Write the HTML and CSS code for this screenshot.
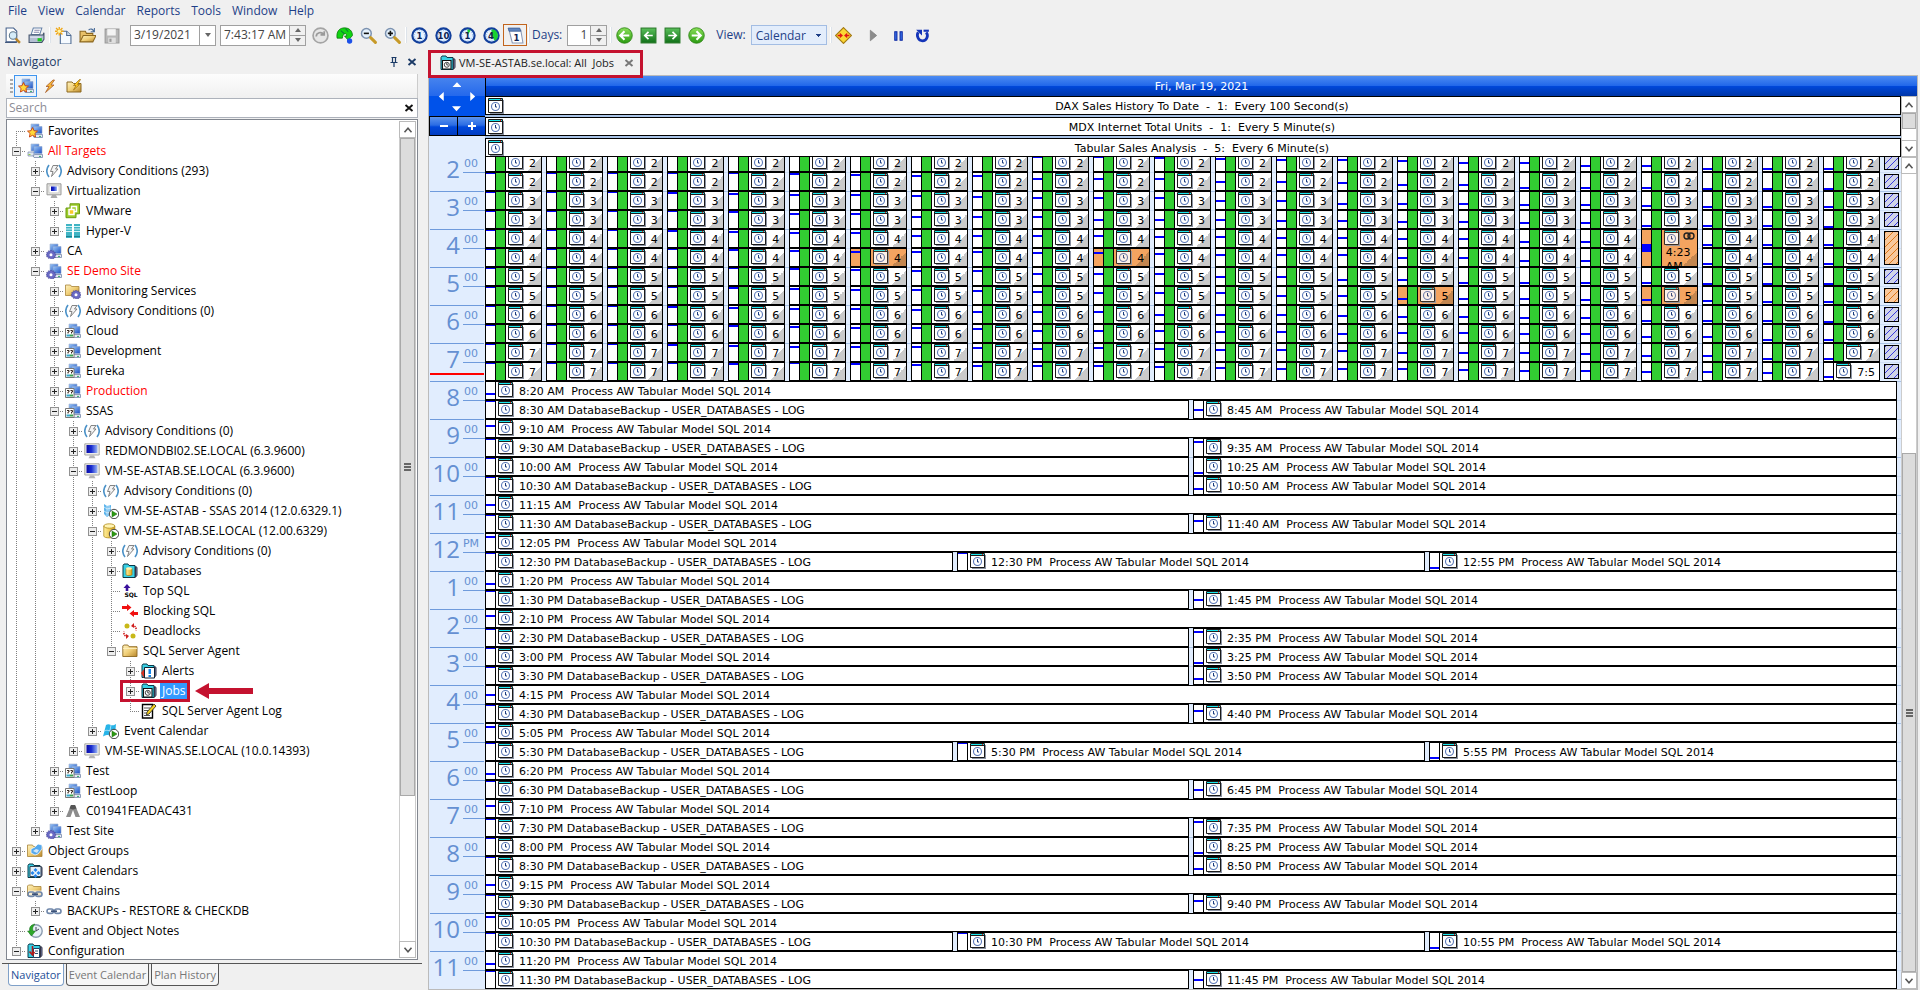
FILE: index.html
```html
<!DOCTYPE html>
<html lang="en">
<head>
<meta charset="utf-8">
<title>VM-SE-ASTAB.se.local: All Jobs</title>
<link rel="stylesheet" href="styles.css">
</head>
<body>
<svg class="sprite" aria-hidden="true">
  <defs>
    <linearGradient id="gBlue" x1="0" y1="0" x2="1" y2="1"><stop offset="0" stop-color="#9cc8f8"/><stop offset="1" stop-color="#1c4fc0"/></linearGradient>
    <linearGradient id="gScreen" x1="0" y1="0" x2="1" y2="0"><stop offset="0" stop-color="#0a0aa8"/><stop offset=".45" stop-color="#1a2ed0"/><stop offset="1" stop-color="#9db8f4"/></linearGradient>
    <linearGradient id="gGold" x1="0" y1="0" x2="1" y2="1"><stop offset="0" stop-color="#fff3c0"/><stop offset=".5" stop-color="#f0cf78"/><stop offset="1" stop-color="#b8862a"/></linearGradient>
    <linearGradient id="gGreen" x1="0" y1="0" x2="0" y2="1"><stop offset="0" stop-color="#8be05a"/><stop offset="1" stop-color="#2a9a10"/></linearGradient>
    <linearGradient id="gGreenSq" x1="0" y1="0" x2="0" y2="1"><stop offset="0" stop-color="#5ac05a"/><stop offset="1" stop-color="#107018"/></linearGradient>
    <linearGradient id="gDb" x1="0" y1="0" x2="1" y2="0"><stop offset="0" stop-color="#fff0a0"/><stop offset="1" stop-color="#e0a818"/></linearGradient>
    <g id="pPcs"><path d="M4 1h8v7H4z" fill="url(#gBlue)" stroke="#9db0cc" stroke-width=".6"/><path d="M7 3.500h8v7H7z" fill="url(#gBlue)" stroke="#8da4cc" stroke-width=".6"/><path d="M6 12.500l2-1h7.500v3H7z" fill="#e6eaf4" stroke="#7587a8" stroke-width=".8"/><path d="M12 13.400h2" stroke="#3a6" /></g>
    <g id="pGear"><g fill="#6a6ac4" stroke="#3c3c94" stroke-width=".5"><path d="M5 7l1 1.300 1.500-.6.300 1.600 1.600.2-.5 1.500 1.300 1-1.300 1 .5 1.500-1.600.2-.3 1.500-1.500-.6L5 16l-1-1.100-1.500.6-.3-1.500-1.600-.2.500-1.500L-.1 12l1.200-1-.5-1.500 1.600-.2.300-1.600L4 8.300z"/></g><circle cx="5" cy="11.800" r="1.500" fill="#fff"/></g>
    <g id="pPlay"><circle cx="11" cy="11" r="4.700" fill="#fff" stroke="#333" stroke-width=".9"/><path d="M9 7.900v6.200l5-3.100z" fill="#2c9a10" stroke="#156a04" stroke-width=".5"/></g>
    <g id="pTeal"><path d="M1 2.500l1-1.500h4l1 1.500h6v12H1z" fill="#38d0e4" stroke="#0b3a4a"/><path d="M13.500 3.500l1.500.8v8l-1.500 2z" fill="#7b88b8" stroke="#334"/></g>
    <g id="pClock"><circle cx="8" cy="8" r="6.700" fill="#e8f3ff" stroke="#123f9c" stroke-width="2"/><circle cx="8" cy="8" r="4.900" fill="none" stroke="#9cc4f0" stroke-width="1" stroke-dasharray="1 1.200"/></g>
    <g id="pLens"><circle cx="6" cy="6" r="4.600" fill="#e4f1fc" stroke="#7c92b0" stroke-width="1.400"/><path d="M10 10l4.500 4.500" stroke="#c79a28" stroke-width="2.800" stroke-linecap="round"/></g>
    <g id="pChain" fill="none" stroke="#6f87aa" stroke-width="1.600"><rect x="1" y="6" width="6.500" height="4.400" rx="2.200"/><rect x="8.500" y="6" width="6.500" height="4.400" rx="2.200"/><path d="M5 8.200h6" stroke="#3c5278"/></g>
  </defs>
  <symbol id="i-preview" viewBox="0 0 16 16"><path d="M2 1h7l3 3v10H2z" fill="#fff" stroke="#47628c"/><path d="M1 14.500h11" stroke="#3a5078"/><circle cx="8.500" cy="8" r="3.500" fill="#d5ecf8" stroke="#60788c"/><path d="M11 11l4 4" stroke="#b98428" stroke-width="2.400"/></symbol>
  <symbol id="i-print" viewBox="0 0 16 16"><path d="M5 1h8l-2 6H3z" fill="#fff" stroke="#6682a8"/><path d="M6 3h5M5.400 5h5" stroke="#88a"/><path d="M1 7.500h13l1-2v6l-2 3H1z" fill="#b4bfd2" stroke="#44546c"/><path d="M2 9.500h10" stroke="#eef"/><path d="M9 10.500h4v3H9z" fill="#1fc81f"/></symbol>
  <symbol id="i-new" viewBox="0 0 16 16"><path d="M5 4h6l4 4v8H5z" fill="#f5faff" stroke="#4c6890"/><path d="M11 4v4h4" fill="#cde" stroke="#4c6890"/><path d="M4 0v8M0 4h8M1 1l6 6M7 1L1 7" stroke="#f0a818" stroke-width="1.300"/><circle cx="4" cy="4" r="1.600" fill="#fff7a8"/></symbol>
  <symbol id="i-open" viewBox="0 0 16 16"><path d="M1 14V4h5l1 2h6v2" fill="#e8c068" stroke="#8c6820"/><path d="M1 14L4 8h12l-3 6z" fill="url(#gGold)" stroke="#8c6820"/><path d="M9 3c2-2 4-1 5 1M14.500 1v3.500H11" fill="none" stroke="#4a6c98"/></symbol>
  <symbol id="i-save" viewBox="0 0 16 16"><path d="M2 2h13v13H2z" fill="#b8b8b8" stroke="#999"/><path d="M4 2h8v6H4z" fill="#f4f4f4"/><path d="M5 10h7v5H5z" fill="#e0e0e0"/><path d="M6 11h2v3H6z" fill="#999"/></symbol>
  <symbol id="i-undo" viewBox="0 0 16 16"><circle cx="8" cy="8" r="7" fill="#e6e6e6" stroke="#a4a4a4" stroke-width="1.600"/><path d="M4 9c0-4 5-5 7-2M11.500 4v3.500H8" fill="none" stroke="#999" stroke-width="1.600"/></symbol>
  <symbol id="i-sync" viewBox="0 0 16 16"><path d="M1 10.500C0 4 3.500 .8 8 .8s7.500 3 7.500 7.200l-4 4.500L8 8.500h2C10.500 5.500 6.500 5 6 10.500z" fill="#12d412" stroke="#087008" stroke-width=".7"/><path d="M4.500 3.500l3.500 3M9 1.500l2.500 3" stroke="#0a7a3a"/><circle cx="12.800" cy="13.200" r="2.500" fill="#1c50e8"/></symbol>
  <symbol id="i-zout" viewBox="0 0 16 16"><use href="#pLens"/><path d="M3.600 6h4.800" stroke="#111" stroke-width="1.500"/></symbol>
  <symbol id="i-zin" viewBox="0 0 16 16"><use href="#pLens"/><path d="M3.600 6h4.800M6 3.600v4.800" stroke="#111" stroke-width="1.500"/></symbol>
  <symbol id="i-c1" viewBox="0 0 16 16"><use href="#pClock"/><text x="8" y="11" class="ic-num">1</text></symbol>
  <symbol id="i-c10" viewBox="0 0 16 16"><use href="#pClock"/><text x="8" y="11" class="ic-num">10</text></symbol>
  <symbol id="i-c1g" viewBox="0 0 16 16"><use href="#pClock"/><path d="M8 8V2l3 1z" fill="#18d030"/><text x="8" y="11" class="ic-num">1</text></symbol>
  <symbol id="i-c4g" viewBox="0 0 16 16"><use href="#pClock"/><path d="M8 8V2.300A5.700 5.700 0 0 1 11 13z" fill="#18d030"/><text x="7.500" y="11" class="ic-num">4</text></symbol>
  <symbol id="i-day" viewBox="0 0 16 16"><path d="M2 3h11l2 12H5z" fill="#fff" stroke="#8a9ab8"/><path d="M1 1h11l1 3H2z" fill="#5f86c0" stroke="#3b5a90" stroke-width=".7"/><text x="9" y="13" class="ic-num">1</text></symbol>
  <symbol id="i-left" viewBox="0 0 16 16"><circle cx="8" cy="8" r="7.300" fill="url(#gGreen)" stroke="#2c8414" stroke-width=".8"/><path d="M12.500 8H4.500M8 4L4 8l4 4" fill="none" stroke="#fff" stroke-width="2"/></symbol>
  <symbol id="i-right" viewBox="0 0 16 16"><circle cx="8" cy="8" r="7.300" fill="url(#gGreen)" stroke="#2c8414" stroke-width=".8"/><path d="M3.500 8h8M8 4l4 4-4 4" fill="none" stroke="#fff" stroke-width="2"/></symbol>
  <symbol id="i-sqleft" viewBox="0 0 16 16"><rect x="1" y="1" width="14" height="14" fill="url(#gGreenSq)" stroke="#2a7a2a"/><path d="M12 8H5M8 4.500L4.500 8 8 11.500" fill="none" stroke="#fff" stroke-width="1.600"/></symbol>
  <symbol id="i-sqright" viewBox="0 0 16 16"><rect x="1" y="1" width="14" height="14" fill="url(#gGreenSq)" stroke="#2a7a2a"/><path d="M4 8h7M8 4.500L11.500 8 8 11.500" fill="none" stroke="#fff" stroke-width="1.600"/></symbol>
  <symbol id="i-diamond" viewBox="0 0 16 16"><path d="M8 .5L15.500 8 8 15.500.500 8z" fill="#fbd634" stroke="#a47a14"/><path d="M2.500 7.300h2V5.500l3 2.500-3 2.500V8.700h-2zM13.500 7.300h-2V5.500l-3 2.500 3 2.500V8.700h2z" fill="#e01414"/></symbol>
  <symbol id="i-play" viewBox="0 0 16 16"><path d="M5 3l6 5-6 5z" fill="#8c8c8c" stroke="#777" stroke-width=".6"/></symbol>
  <symbol id="i-pause" viewBox="0 0 16 16"><path d="M4.500 4.500h2v8h-2zM9.500 4.500h2v8h-2z" fill="#3c7cf4" stroke="#0a24a0"/></symbol>
  <symbol id="i-refresh" viewBox="0 0 16 16"><path d="M4 5c-2 3 0 8 4 8s6-5 3.500-8" fill="none" stroke="#1434b8" stroke-width="2.600"/><path d="M2 2.500h5.500V8z" fill="#1434b8"/><path d="M9 3.500h5" stroke="#1434b8" stroke-width="2"/></symbol>
  <symbol id="i-pin" viewBox="0 0 16 16"><path d="M5.500 3.500h5M6.500 3.500v5M9.500 3v5.500M4.500 8.500h7M8 9v4" fill="none" stroke="#1b3a66" stroke-width="1.200"/></symbol>
  <symbol id="i-x" viewBox="0 0 16 16"><path d="M4.500 5l7 6M11.500 5l-7 6" stroke="currentColor" stroke-width="1.900"/></symbol>
  <symbol id="i-bolt" viewBox="0 0 16 16"><path d="M11 2L4 8.500h3L3.500 14.500l8.500-7.500H9l3.500-5z" fill="#f8b838" stroke="#a85c28" stroke-width=".8"/></symbol>
  <symbol id="i-fbolt" viewBox="0 0 16 16"><path d="M1 4h5l1.500 1.500H15v8.500H1z" fill="url(#gGold)" stroke="#8c6820"/><path d="M13.500 1.500L7.500 7.500h2.500L7.500 12l6-5.500h-2l3-5z" fill="#ffc820" stroke="#9a6a10" stroke-width=".7"/></symbol>

  <symbol id="i-fav" viewBox="0 0 16 16"><use href="#pPcs"/><path d="M5.500 4.500l1.500 3.200 3.500.4-2.600 2.400.7 3.500-3.100-1.700L2.400 14l.7-3.500L.5 8.100 4 7.700z" fill="#ffd83a" stroke="#c83c10" stroke-width=".9"/></symbol>
  <symbol id="i-targets" viewBox="0 0 16 16"><path d="M1 9h6v4H1z" fill="#dfe5f0" stroke="#7587a8" stroke-width=".7"/><path d="M1.500 11.600h2" stroke="#8c3"/><use href="#pPcs"/></symbol>
  <symbol id="i-adv" viewBox="0 0 16 16"><path d="M3 2C0 6 0 10 3 14M13 2c3 4 3 8 0 12" fill="none" stroke="#4c92c8" stroke-width="1.600"/><path d="M7 2.500h5L9.500 6H12l-6.500 7.500L7 8.500H4.500z" fill="#f4f4f4" stroke="#777" stroke-width=".9"/></symbol>
  <symbol id="i-virt" viewBox="0 0 16 16"><path d="M1 .8h14v11H1z" fill="#e4e4e0" stroke="#999"/><path d="M3 2.800h10v7H3z" fill="#fff" stroke="#bbb" stroke-width=".6"/><path d="M5 3.500h6v4.500H5z" fill="url(#gScreen)"/><path d="M6 12h4l1.500 3h-7z" fill="#aaa"/></symbol>
  <symbol id="i-vm" viewBox="0 0 16 16"><path d="M5 .8h9.500v10H11V14.700H1V5h4z" fill="#9ccc2a" stroke="#6c9c10"/><rect x="6.500" y="3.500" width="5" height="5" fill="none" stroke="#fff" stroke-width="1.500"/><rect x="4" y="6.500" width="5" height="5" fill="#f8c828" stroke="#fff" stroke-width="1.500"/></symbol>
  <symbol id="i-hv" viewBox="0 0 16 16"><path d="M1 1h6v14H1zM9 1h6v14H9z" fill="#3fb4c4"/><path d="M1 3.500h6M1 6h6M1 8.500h6M9 3.500h6M9 6h6M9 8.500h6" stroke="#d4f4f8"/><path d="M1 13.500h6M9 13.500h6" stroke="#1c8090"/></symbol>
  <symbol id="i-site" viewBox="0 0 16 16"><use href="#pPcs"/><use href="#pGear"/></symbol>
  <symbol id="i-fgear" viewBox="0 0 16 16"><path d="M0.500 3V2h5l1 1.500H14v9H.5z" fill="url(#gGold)" stroke="#a88438" stroke-width=".8"/><use href="#pGear" x="6"/></symbol>
  <symbol id="i-group" viewBox="0 0 16 16"><use href="#pPcs"/><path d="M.5 5.500h8.500v9H.5z" fill="#fff" stroke="#777"/><path d="M2 7.500h2v1.500H3v1.500M5.500 7.500h2v1.500h-1v1.500" fill="none" stroke="#3a2a20"/><path d="M1.500 12.500h3.500" stroke="#38a8c8" stroke-width="2"/><path d="M5 12.500h3" stroke="#3aa050" stroke-width="2"/></symbol>
  <symbol id="i-pc" viewBox="0 0 16 16"><path d="M.8.800h14.400v11.200H.8z" fill="#ecece8" stroke="#a8a8a4"/><path d="M2.500 2h11v8h-11z" fill="url(#gScreen)"/><path d="M6 12.500h4l1.500 2.700h-7z" fill="#b4b4b4"/></symbol>
  <symbol id="i-ssas" viewBox="0 0 16 16"><path d="M1 1l3 2 4-1v9l-4 3-3-3z" fill="#5cb4ec"/><path d="M1 4l3 2 4-1M1 8l3 2 4-1M4 3v10M6 2.500V12" stroke="#fff" fill="none" stroke-width=".6"/><use href="#pPlay"/></symbol>
  <symbol id="i-db" viewBox="0 0 16 16"><path d="M.8 3v10c0 2.500 11 2.500 11 0V3z" fill="url(#gDb)" stroke="#b08a18" stroke-width=".8"/><ellipse cx="6.300" cy="3" rx="5.500" ry="2.200" fill="#fff4b4" stroke="#b08a18" stroke-width=".8"/><use href="#pPlay"/></symbol>
  <symbol id="i-dbs" viewBox="0 0 16 16"><use href="#pTeal"/><path d="M4 5.500v6c0 1.400 6 1.400 6 0v-6z" fill="url(#gDb)" stroke="#a07410" stroke-width=".7"/><ellipse cx="7" cy="5.500" rx="3" ry="1.200" fill="#fff4b4"/></symbol>
  <symbol id="i-topsql" viewBox="0 0 16 16"><path d="M5 1L1.500 5h2.200v3h2.600V5h2.200z" fill="#3a109c"/><text x="9" y="14" class="ic-sql">SQL</text></symbol>
  <symbol id="i-block" viewBox="0 0 16 16"><path d="M0 3h5V1l4.500 3.500L5 8V6H0z" fill="#f01010"/><path d="M16 9h-4V7L7.500 10.500 12 14v-2h4z" fill="#f01010"/></symbol>
  <symbol id="i-dead" viewBox="0 0 16 16"><circle cx="5" cy="3" r="2.500" fill="#c8b818"/><circle cx="11" cy="13" r="2.500" fill="#c8b818"/><path d="M10 2.500c3 0 4.500 2 4 5M6 13.500c-3 0-4.500-2-4-5" fill="none" stroke="#d02020" stroke-width="1.600" stroke-dasharray="1.500 .8"/><path d="M9 3l3-3v5zM7 13l-3 3v-5z" fill="#d02020"/></symbol>
  <symbol id="i-folder" viewBox="0 0 16 16"><path d="M.8 13.500V3l1-1h4l1.200 1.700H15v9.800z" fill="url(#gGold)" stroke="#8c6820" stroke-width=".9"/><path d="M1 5.500h14" stroke="#fff3c4" stroke-width=".8"/></symbol>
  <symbol id="i-alerts" viewBox="0 0 16 16"><use href="#pTeal"/><path d="M0 10l3-4v9z" fill="#d83020"/><path d="M3.500 4.500h10v10.500h-10z" fill="#fff" stroke="#123"/><path d="M7.500 6h2.500v5H7.500zM7.500 12h2.500v2H7.500z" fill="#1484e8"/></symbol>
  <symbol id="i-jobs" viewBox="0 0 16 16"><use href="#pTeal"/><path d="M2.500 5.500h8.500v8.500H2.500z" fill="#fff" stroke="#111" stroke-width="1.100"/><circle cx="6.800" cy="9.800" r="2.500" fill="#fff" stroke="#333" stroke-width=".9"/><path d="M6.800 8v2h1.500" fill="none" stroke="#111" stroke-width=".8"/></symbol>
  <symbol id="i-log" viewBox="0 0 16 16"><path d="M1.500 1.500h10v13.500h-10z" fill="#fff" stroke="#000" stroke-width="1.400"/><path d="M3 5h6M3 7.500h6M3 10h6M3 12.500h6" stroke="#555"/><path d="M13 1l2 2-7 8-2.500 1L6 9z" fill="#f4d020" stroke="#222" stroke-width=".8"/></symbol>
  <symbol id="i-evcal" viewBox="0 0 16 16"><path d="M3 2c2-1.500 3.500-.5 5 0s3 .5 5-1l-1 11c-3 2-5 0-7 0-1.500 0-3 0-5 1.500z" fill="#28b4e8"/><path d="M8 2l-2 11M1.500 8c3-2 5 1 11 0" stroke="#d8f4ff" fill="none" stroke-width=".7"/><use href="#pPlay"/></symbol>
  <symbol id="i-tent" viewBox="0 0 16 16"><path d="M6 2h4l5 12h-4.500L8 7l-2.500 7H1z" fill="#8c8c8c"/><path d="M6 2h4l1.500 3.500-3.500 1-3.500-1z" fill="#555"/></symbol>
  <symbol id="i-objg" viewBox="0 0 16 16"><path d="M.5 13.500V2h5l1 1.500H15v10z" fill="url(#gGold)" stroke="#a88438" stroke-width=".8"/><path d="M4 6l4-2 3-3 4 1v4l-4 5-3 1-4-2z" fill="#55a8ec" stroke="#fff" stroke-width=".7"/><path d="M6 8l3-2 3 1-2 3z" fill="#cfe8fc"/></symbol>
  <symbol id="i-evcals" viewBox="0 0 16 16"><use href="#pTeal"/><path d="M3 3.500h11v10H3z" fill="#e8f0f8" stroke="#345"/><path d="M8.500 5l2 2-2 2-2-2zM5.500 8l2 2-2 2-2-2zM11.500 8l2 2-2 2-2-2zM8.500 11l2 2-2 2-2-2z" fill="#2484ec"/></symbol>
  <symbol id="i-chains" viewBox="0 0 16 16"><path d="M.5 12.500V3l1-1h4l1 1.500H14v9z" fill="url(#gGold)" stroke="#a88438" stroke-width=".8"/><path d="M1 7.500h14v7H1z" fill="#fff" fill-opacity=".7"/><use href="#pChain" y="3"/></symbol>
  <symbol id="i-chain" viewBox="0 0 16 16"><use href="#pChain"/></symbol>
  <symbol id="i-notes" viewBox="0 0 16 16"><circle cx="9" cy="8" r="6.200" fill="#e8f0f8" stroke="#8c9cb0" stroke-width="1.400"/><path d="M9 4v4l3-2" stroke="#445" fill="none"/><path d="M8 1C3 2 2 5 3 8H.5l4 5 4-5H6c-1-3 0-5 2-7z" fill="#2fa82a" stroke="#14701a" stroke-width=".5"/></symbol>
  <symbol id="i-config" viewBox="0 0 16 16"><use href="#pTeal"/><path d="M6.500 5.500h6v9h-6z" fill="#fff" stroke="#246"/><path d="M8 8h3M8 10.500h3" stroke="#357"/><path d="M5.500 3v8M2.500 8.500l3 3.500 2-3" stroke="#b01818" stroke-width="1.600" fill="none"/></symbol>
  <symbol id="i-job" viewBox="0 0 16 16"><path d="M2 2h14v14H2z" fill="#8c94a4"/><path d="M.5.500h14v14H.5z" fill="#fff" stroke="#1a1a1a"/><path d="M1 1h13v1H1z" fill="#18e8f0"/><path d="M12 1h1v1h-1z" fill="#f02020"/><path d="M1 2.500h13" stroke="#1a1a1a"/><circle cx="7.500" cy="8.500" r="4" fill="#fff" stroke="#5a78b8" stroke-width="1.100"/><path d="M7.500 6v3h1.500" fill="none" stroke="#1c3c80"/></symbol>
  <symbol id="i-link" viewBox="0 0 12 10"><circle cx="4" cy="5" r="3" fill="none" stroke="#222" stroke-width="1.400"/><circle cx="8" cy="5" r="3" fill="none" stroke="#222" stroke-width="1.400"/></symbol>
  <symbol id="i-up" viewBox="0 0 16 16"><path d="M4 10.500L8 6l4 4.500" fill="none" stroke="#555" stroke-width="1.800"/></symbol>
  <symbol id="i-down" viewBox="0 0 16 16"><path d="M4 5.500L8 10l4-4.500" fill="none" stroke="#555" stroke-width="1.800"/></symbol>
</svg>

<div class="app">
  <nav class="menu" aria-label="Main menu">
    <button>File</button><button>View</button><button>Calendar</button><button>Reports</button><button>Tools</button><button>Window</button><button>Help</button>
  </nav>

  <div class="toolbar" role="toolbar" aria-label="Standard">
    <button class="tb" aria-label="Print preview"><svg><use href="#i-preview"/></svg></button>
    <button class="tb" aria-label="Print"><svg><use href="#i-print"/></svg></button>
    <i class="sep"></i>
    <button class="tb" aria-label="New"><svg><use href="#i-new"/></svg></button>
    <button class="tb" aria-label="Open"><svg><use href="#i-open"/></svg></button>
    <button class="tb" aria-label="Save"><svg><use href="#i-save"/></svg></button>
    <div class="field date"><input type="text" value="3/19/2021" aria-label="Date"><button class="drop" aria-label="Open date picker"></button></div>
    <div class="field time"><input type="text" value="7:43:17 AM" aria-label="Time"><span class="spin"><button aria-label="Later"></button><button aria-label="Earlier"></button></span></div>
    <button class="tb" aria-label="Now"><svg><use href="#i-undo"/></svg></button>
    <button class="tb" aria-label="Synchronize"><svg><use href="#i-sync"/></svg></button>
    <button class="tb" aria-label="Zoom out"><svg><use href="#i-zout"/></svg></button>
    <button class="tb" aria-label="Zoom in"><svg><use href="#i-zin"/></svg></button>
    <i class="sep"></i>
    <button class="tb" aria-label="1 minute"><svg><use href="#i-c1"/></svg></button>
    <button class="tb" aria-label="10 minutes"><svg><use href="#i-c10"/></svg></button>
    <button class="tb" aria-label="1 hour"><svg><use href="#i-c1g"/></svg></button>
    <button class="tb" aria-label="4 hours"><svg><use href="#i-c4g"/></svg></button>
    <button class="tb on" aria-label="1 day"><svg><use href="#i-day"/></svg></button>
    <i class="sep"></i>
    <label for="days" class="lbl">Days:</label>
    <div class="field days"><input type="text" id="days" value="1"><span class="spin"><button aria-label="More days"></button><button aria-label="Fewer days"></button></span></div>
    <i class="sep"></i>
    <button class="tb" aria-label="Back"><svg><use href="#i-left"/></svg></button>
    <button class="tb" aria-label="Previous"><svg><use href="#i-sqleft"/></svg></button>
    <button class="tb" aria-label="Next"><svg><use href="#i-sqright"/></svg></button>
    <button class="tb" aria-label="Forward"><svg><use href="#i-right"/></svg></button>
    <label for="view" class="lbl view">View:</label>
    <select id="view"><option>Calendar</option></select>
    <i class="sep"></i>
    <button class="tb" aria-label="Conflicts"><svg><use href="#i-diamond"/></svg></button>
    <button class="tb wide" aria-label="Run"><svg><use href="#i-play"/></svg></button>
    <button class="tb" aria-label="Pause"><svg><use href="#i-pause"/></svg></button>
    <button class="tb" aria-label="Refresh"><svg><use href="#i-refresh"/></svg></button>
  </div>

  <div class="work">
    <aside class="navigator">
      <header class="nav-title"><h2>Navigator</h2><button aria-label="Pin"><svg><use href="#i-pin"/></svg></button><button aria-label="Close navigator"><svg><use href="#i-x"/></svg></button></header>
      <div class="nav-tools">
        <i class="grip"></i>
        <button class="on" aria-label="Targets"><svg><use href="#i-fav"/></svg></button>
        <button aria-label="Conditions"><svg><use href="#i-bolt"/></svg></button>
        <button aria-label="Condition groups"><svg><use href="#i-fbolt"/></svg></button>
      </div>
      <div class="search"><input type="text" placeholder="Search" aria-label="Search"><button aria-label="Clear search"><svg><use href="#i-x"/></svg></button></div>
      <div class="tree-box">
        <div class="tree" id="tree" role="tree"></div>
        <div class="scroll nav-scroll">
          <button aria-label="Scroll tree up"><svg><use href="#i-up"/></svg></button>
          <div class="track"><div class="thumb"><i class="bars"></i></div></div>
          <button aria-label="Scroll tree down"><svg><use href="#i-down"/></svg></button>
        </div>
      </div>
      <div class="nav-tabs" role="tablist"><button role="tab" class="on">Navigator</button><button role="tab">Event Calendar</button><button role="tab">Plan History</button></div>
    </aside>

    <main class="main">
      <div class="doc-tabs">
        <div class="doc-tab"><svg><use href="#i-jobs"/></svg><span>VM-SE-ASTAB.se.local: All&nbsp; Jobs</span><button aria-label="Close tab"><svg><use href="#i-x"/></svg></button></div>
      </div>
      <section class="cal">
        <div class="gutter">
          <div class="pad"><button class="up" aria-label="Up"></button><button class="lf" aria-label="Left"></button><button class="rt" aria-label="Right"></button><button class="dn" aria-label="Down"></button></div>
          <div class="zoom"><button class="minus" aria-label="Collapse"></button><button class="plus" aria-label="Expand"></button></div>
          <div class="hours" id="hours"></div>
        </div>
        <div class="days-view">
          <h1 class="day-head">Fri, Mar 19, 2021</h1>
          <div class="strip">
            <div class="allday" id="allday"></div>
            <div class="scroll top-scroll">
              <button aria-label="Scroll all-day up"><svg><use href="#i-up"/></svg></button>
              <div class="track"><div class="thumb"></div></div>
              <button aria-label="Scroll all-day down"><svg><use href="#i-down"/></svg></button>
            </div>
          </div>
          <div class="strip fill">
            <div class="slots">
              <div class="dense" id="dense"></div>
              <div class="rows" id="rows"></div>
            </div>
            <div class="scroll day-scroll">
              <button aria-label="Scroll day up"><svg><use href="#i-up"/></svg></button>
              <div class="track"><div class="thumb"><i class="bars"></i></div></div>
              <button aria-label="Scroll day down"><svg><use href="#i-down"/></svg></button>
            </div>
          </div>
        </div>
      </section>
    </main>
  </div>
</div>
<script src="app.js"></script>
</body>
</html>
```

FILE: styles.css
```css
* { box-sizing: border-box; }
body {
  margin: 0;
  background: #f0f0f0;
  color: #000;
  font: 12px/20px "Open Sans", "Noto Sans", sans-serif;
}
button, input, select { font: inherit; color: inherit; margin: 0; padding: 0; border: 0; background: none; border-radius: 0; }
button { cursor: default; }
h1, h2 { margin: 0; font-weight: normal; }
svg { display: block; width: 16px; height: 16px; flex: none; }
.sprite { position: absolute; width: 0; height: 0; }
.ic-num { font: bold 8px "DejaVu Sans", sans-serif; text-anchor: middle; fill: #0c1c50; }
.ic-sql { font: bold 6px "DejaVu Sans", sans-serif; text-anchor: middle; fill: #000; }

.app { display: flex; flex-direction: column; height: 100vh; overflow: hidden; }

/* menu and toolbar */
.menu { display: flex; gap: 11px; height: 22px; padding-left: 8px; color: #1e3f87; }
.toolbar { display: flex; align-items: center; gap: 4px; height: 26px; padding-left: 2px; color: #1e3f87; }
.tb { display: grid; place-items: center; width: 20px; height: 20px; }
.tb svg { width: 17px; height: 17px; }
.tb.on { width: 24px; height: 22px; border: 1px solid #c2641c; margin: 0 -2px; }
.tb.wide { margin: 0 1px 0 6px; }
.sep { width: 1px; height: 16px; background: #fff; margin: 0 -1px; box-shadow: 1px 0 #dde3ea; }
.field { display: flex; height: 21px; background: #fff; border: 1px solid #a0a0a0; color: #444; }
.field input { flex: 1; min-width: 0; padding-left: 3px; outline: 0; }
.date { width: 86px; margin: 0 0 0 5px; }
.time { width: 86px; }
.days { width: 40px; }
.days input { text-align: right; padding-right: 3px; }
.drop { width: 16px; border-left: 1px solid #a0a0a0; display: grid; place-items: center; }
.drop::after, .spin button::after { content: ""; border: 3px solid transparent; border-top: 4px solid #666; border-bottom: 0; }
.spin { display: flex; flex-direction: column; width: 16px; border-left: 1px solid #a0a0a0; }
.spin button { flex: 1; display: grid; place-items: center; background: #f0f0f0; }
.spin button:first-child { border-bottom: 1px solid #a0a0a0; }
.spin button:first-child::after { transform: rotate(180deg); }
.lbl { margin: 0 1px 0 0; }
.lbl.view { margin-left: 6px; }
#view {
  appearance: none; width: 76px; height: 20px; padding-left: 4px; border: 1px solid #a3bde3;
  background: linear-gradient(#1e3f87, #1e3f87) no-repeat 64px 8px / 5px 1px, linear-gradient(#1e3f87, #1e3f87) no-repeat 65px 9px / 3px 1px, linear-gradient(#1e3f87, #1e3f87) no-repeat 66px 10px / 1px 1px, #e3edfb;
}

.work { display: flex; flex: 1; min-height: 0; padding-top: 2px; }

/* navigator */
.navigator { display: flex; flex-direction: column; width: 428px; flex: none; padding: 0 10px 4px 6px; }
.nav-title { display: flex; align-items: center; height: 24px; margin-right: -2px; color: #1b3a66; gap: 2px; }
.nav-title h2 { flex: 1; font-size: 12px; padding-left: 1px; }
.nav-tools { display: flex; align-items: center; gap: 1px; height: 24px; padding-left: 4px; background: linear-gradient(#fdfdfd, #f0f0f0); border-right: 1px solid #ccc; }
.nav-tools .grip { width: 3px; height: 14px; background: repeating-linear-gradient(#aaa 0 2px, transparent 2px 4px); }
.nav-tools button { display: grid; place-items: center; width: 23px; height: 22px; }
.nav-tools .on { border: 1px solid #3f95ef; background: #eaf3fc; }
.search { display: flex; align-items: center; height: 20px; border: 1px solid #adb2bb; background: #fff; }
.search input { flex: 1; padding-left: 2px; outline: 0; }
.search input::placeholder { color: #8d8d96; opacity: 1; }
.search svg { color: #111; }
.tree-box { display: flex; flex: 1; min-height: 0; margin-top: 1px; border: 1px solid #828790; background: #fff; padding: 1px 1px 1px 0; }
.tree { flex: 1; min-width: 0; overflow: hidden; }
.row { display: flex; align-items: center; height: 20px; position: relative; white-space: nowrap; }
.g { width: 19px; height: 20px; flex: none; display: grid; place-items: center; --d: repeating-linear-gradient(#808080 0 1px, transparent 1px 2px); --h: repeating-linear-gradient(90deg, #808080 0 1px, transparent 1px 2px); }
.g.v { background: var(--d) 9px 0 / 1px 20px no-repeat; }
.g.t { background: var(--h) 9px 10px / 10px 1px no-repeat, var(--d) 9px 0 / 1px 20px no-repeat; }
.g.l { background: var(--h) 9px 10px / 10px 1px no-repeat, var(--d) 9px 0 / 1px 10px no-repeat; }
.g.f { background: var(--h) 9px 10px / 10px 1px no-repeat, var(--d) 9px 10px / 1px 10px no-repeat; }
.ex { width: 9px; height: 9px; border: 1px solid #919191; background: linear-gradient(#222, #222) center / 5px 1px no-repeat, #eee; }
.ex.plus { background: linear-gradient(#222, #222) center / 5px 1px no-repeat, linear-gradient(#222, #222) center / 1px 5px no-repeat, #eee; }
.row svg { margin: 0 3px 0 1px; }
.row .name { padding: 0 2px; line-height: 16px; }
.row .red { color: #f00; }
.row .sel { background: #3399ff; color: #fff; }
.callout { position: absolute; left: 113px; top: -1px; width: 70px; height: 22px; border: 3px solid #c4122f; }
.arrow { position: absolute; left: 188px; top: 2px; display: flex; align-items: center; }
.arrow::before { content: ""; border: 8px solid transparent; border-right: 14px solid #c4122f; border-left: 0; }
.arrow::after { content: ""; width: 44px; height: 6px; background: #c4122f; }
.nav-tabs { display: flex; gap: 2px; height: 23px; margin: 3px -4px 0; padding-left: 6px; border-top: 1px solid #555; }
.nav-tabs button { height: 22px; padding: 0 2px; border: 1px solid #555; border-top: 0; border-radius: 0 0 4px 4px; color: #777; background: #f6f6f6; font-size: 11px; }
.nav-tabs .on { color: #1e4f97; border-color: #7fa0c8; background: #fff; }

/* scrollbars */
.scroll { display: flex; flex-direction: column; flex: none; width: 17px; background: #fff; }
.scroll > button { display: grid; place-items: center; height: 17px; flex: none; border: 1px solid #bbb; background: #fff; }
.scroll > button svg { width: 14px; height: 14px; }
.track { flex: 1; display: flex; flex-direction: column; border: 1px solid #ccc; border-width: 0 1px; }
.thumb { display: grid; place-items: center; background: #dcdcdc; border: 1px solid #a9a9a9; }
.bars { width: 7px; height: 8px; background: repeating-linear-gradient(#666 0 2px, transparent 2px 3px); }
.nav-scroll .thumb { height: 82%; }
.top-scroll .thumb { height: 60%; }
.day-scroll .track { justify-content: flex-end; }
.day-scroll .thumb { height: 65%; }
.top-scroll, .day-scroll { width: 16px; }

/* document area */
.main { flex: 1; min-width: 0; display: flex; flex-direction: column; padding-right: 2px; }
.doc-tabs { display: flex; height: 25px; }
.doc-tab { display: flex; align-items: center; gap: 3px; width: 215px; height: 28px; padding: 0 3px 2px 9px; border: 3px solid #c4122f; background: #f0f0f0; color: #222; font-size: 11px; position: relative; z-index: 1; white-space: nowrap; }
.doc-tab span { flex: 1; }
.doc-tab button { color: #777; }

.cal { display: flex; flex: 1; min-height: 0; border: 1px solid #bbb; background: #e1edfe; }
.gutter { display: flex; flex-direction: column; width: 56px; flex: none; overflow: hidden; color: #6590d2; }
.pad { display: grid; grid-template-columns: repeat(3, 1fr); height: 40px; padding: 3px 5px 2px; align-items: center; justify-items: center; background: linear-gradient(#4a86ee, #2468ec 50%, #0052ea 50%, #0052ea); }
.pad button { width: 9px; height: 9px; background: #fff; clip-path: polygon(0 75%, 50% 20%, 100% 75%); }
.pad .up { grid-area: 1 / 2; }
.pad .lf { grid-area: 2 / 1; transform: rotate(-90deg); }
.pad .rt { grid-area: 2 / 3; transform: rotate(90deg); }
.pad .dn { grid-area: 3 / 2; transform: rotate(180deg); }
.zoom { display: grid; grid-template-columns: 1fr 1fr; gap: 1px; height: 20px; padding: 1px 0 1px 1px; background: #000; flex: none; }
.zoom button { --w: linear-gradient(#fff, #fff) center no-repeat; --s: linear-gradient(#5c94ee, #2a6ce4 45%, #0048dc 55%, #003cc0); }
.zoom .minus { background: linear-gradient(#fff, #fff) center / 8px 2px no-repeat, var(--s); }
.zoom .plus { background: linear-gradient(#fff, #fff) center / 8px 2px no-repeat, linear-gradient(#fff, #fff) center / 2px 8px no-repeat, var(--s); }
.hours { display: flex; flex-direction: column; justify-content: flex-end; flex: 1; min-height: 0; overflow: hidden; }
.hour { display: flex; height: 38px; flex: none; padding-left: 1px; background: linear-gradient(#6f9bdc, #6f9bdc) 1px 0 / 54px 1px no-repeat, linear-gradient(#6f9bdc, #6f9bdc) 34px 19px / 22px 1px no-repeat; position: relative; }
.hour:first-child { background-size: 0 0, 22px 1px; }
.hour b { width: 30px; font: 24px/32px "Open Sans", sans-serif; text-align: right; }
.hour small { width: 22px; font: 11px/21px "DejaVu Sans", sans-serif; text-align: center; }
.now { position: absolute; left: 1px; right: 1px; bottom: 6px; height: 2px; background: #f00; }

.days-view { flex: 1; min-width: 0; display: flex; flex-direction: column; font: 11px/17px "DejaVu Sans", sans-serif; }
.day-head { height: 20px; flex: none; font-size: 11px; line-height: 20px; padding-top: 1px; text-align: center; color: #fff; border-left: 1px solid #000; background: linear-gradient(#4d8cf2, #2066ea 50%, #0048dc 50%, #0036a8); }
.strip { display: flex; flex: none; }
.strip.fill { flex: 1; min-height: 0; }
.allday { flex: 1; display: flex; flex-direction: column; gap: 2px; background: #a9c3e6; }
.allday div { display: flex; align-items: center; height: 19px; border: 1px solid #000; background: #fff; padding-left: 2px; }
.allday span { flex: 1; text-align: center; white-space: pre; padding-top: 2px; }
.slots { flex: 1; min-width: 0; display: flex; flex-direction: column; justify-content: flex-end; overflow: hidden; background: linear-gradient(#a9c3e6 1px, transparent 1px 19px, #cfdff5 19px 20px, transparent 20px) 0 100% / 100% 38px; }
.dense { display: grid; grid-template-columns: repeat(23, minmax(0, 1fr)) 15px; grid-auto-rows: 19px; column-gap: 4px; padding-right: 2px; flex: none; }
.rows { flex: none; padding-right: 4px; }
.line { display: grid; grid-auto-flow: column; grid-auto-columns: minmax(0, 1fr); column-gap: 4px; height: 19px; }
.ev { display: flex; border: 1px solid #000; background: #fff; overflow: hidden; min-width: 0; }
.mark { width: 10px; flex: none; border-right: 1px solid #000; }
.mark i { display: block; height: 2px; background: #00f; }
.mark .edge { height: 1px; }
.bar { width: 10px; flex: none; background: #32cd32; border-right: 1px solid #000; }
.body { flex: 1; min-width: 0; display: flex; gap: 5px; padding-left: 2px; white-space: pre; }
.body span { padding-top: 3px; line-height: 14px; }
.dense .body { background: linear-gradient(135deg, transparent 50%, #cacaca 50%) 100% 100% / 14px 14px no-repeat; }
.dense .plain .body { background: none; }
.warn { background: #f4a460; }
.dense .warn .body { background-image: linear-gradient(135deg, transparent 50%, #c38650 50%); }
.warn svg { opacity: .85; }
.big .mark i { height: 8px; }
.big .body { display: grid; grid-template-columns: 16px 1fr; gap: 0 3px; align-content: start; }
.big .body .link { width: 12px; height: 12px; opacity: 1; }
.big .body span { grid-column: 1 / 3; white-space: normal; padding: 0 0 0 2px; }
.hatch { margin: 2px 0; border: 1px solid #000; background: repeating-linear-gradient(135deg, #3a3ae0 0 1px, #d0d4e8 1px 5px); }
.hatch.hot { background: repeating-linear-gradient(135deg, #e07818 0 1px, #f8c89c 1px 5px); }
```

FILE: app.js
```js
const icon = (id, cls = "") => `<svg class="${cls}" aria-hidden="true"><use href="#i-${id}"/></svg>`;
const $ = (id) => document.getElementById(id);

/* navigator: [level, expander, icon, label, flag] */
const nodes = [
  [0, "", "fav", "Favorites"],
  [0, "-", "targets", "All Targets", "red"],
  [1, "+", "adv", "Advisory Conditions (293)"],
  [1, "-", "virt", "Virtualization"],
  [2, "+", "vm", "VMware"],
  [2, "+", "hv", "Hyper-V"],
  [1, "+", "site", "CA"],
  [1, "-", "site", "SE Demo Site", "red"],
  [2, "+", "fgear", "Monitoring Services"],
  [2, "+", "adv", "Advisory Conditions (0)"],
  [2, "+", "group", "Cloud"],
  [2, "+", "group", "Development"],
  [2, "+", "group", "Eureka"],
  [2, "+", "group", "Production", "red"],
  [2, "-", "group", "SSAS"],
  [3, "+", "adv", "Advisory Conditions (0)"],
  [3, "+", "pc", "REDMONDBI02.SE.LOCAL (6.3.9600)"],
  [3, "-", "pc", "VM-SE-ASTAB.SE.LOCAL (6.3.9600)"],
  [4, "+", "adv", "Advisory Conditions (0)"],
  [4, "+", "ssas", "VM-SE-ASTAB - SSAS 2014 (12.0.6329.1)"],
  [4, "-", "db", "VM-SE-ASTAB.SE.LOCAL (12.00.6329)"],
  [5, "+", "adv", "Advisory Conditions (0)"],
  [5, "+", "dbs", "Databases"],
  [5, "", "topsql", "Top SQL"],
  [5, "", "block", "Blocking SQL"],
  [5, "", "dead", "Deadlocks"],
  [5, "-", "folder", "SQL Server Agent"],
  [6, "+", "alerts", "Alerts"],
  [6, "+", "jobs", "Jobs", "sel"],
  [6, "", "log", "SQL Server Agent Log"],
  [4, "+", "evcal", "Event Calendar"],
  [3, "+", "pc", "VM-SE-WINAS.SE.LOCAL (10.0.14393)"],
  [2, "+", "group", "Test"],
  [2, "+", "group", "TestLoop"],
  [2, "+", "tent", "C01941FEADAC431"],
  [1, "+", "site", "Test Site"],
  [0, "+", "objg", "Object Groups"],
  [0, "+", "evcals", "Event Calendars"],
  [0, "-", "chains", "Event Chains"],
  [1, "+", "chain", "BACKUPs - RESTORE & CHECKDB"],
  [0, "", "notes", "Event and Object Notes"],
  [0, "-", "config", "Configuration"],
];
const continues = (i, level) => {
  for (let j = i + 1; j < nodes.length; j++) {
    if (nodes[j][0] < level) return false;
    if (nodes[j][0] === level) return true;
  }
  return false;
};
$("tree").innerHTML = nodes.map(([level, ex, ic, label, flag = ""], i) => {
  let guides = "";
  for (let l = 0; l < level; l++) guides += `<span class="g ${continues(i, l) ? "v" : ""}"></span>`;
  const join = i === 0 ? "f" : continues(i, level) ? "t" : "l";
  const box = ex ? `<button class="ex ${ex === "+" ? "plus" : ""}" aria-label="${ex === "+" ? "Expand" : "Collapse"}"></button>` : "";
  const notes = flag === "sel" ? `<i class="callout"></i><i class="arrow"></i>` : "";
  return `<div class="row" role="treeitem">${guides}<span class="g ${join}">${box}</span>${icon(ic)}<span class="name ${flag}">${label.replace("&", "&amp;")}</span>${notes}</div>`;
}).join("");

/* hour gutter, 2 AM to 11 PM */
$("hours").innerHTML = Array.from({ length: 22 }, (_, k) => k + 2).map((h) =>
  `<div class="hour"><b>${h > 12 ? h - 12 : h}</b><small>${h === 12 ? "PM" : "00"}</small>${h === 7 ? '<i class="now"></i>' : ""}</div>`
).join("");

/* recurring jobs */
$("allday").innerHTML = [
  "DAX Sales History To Date  -  1:  Every 100 Second(s)",
  "MDX Internet Total Units  -  1:  Every 5 Minute(s)",
  "Tabular Sales Analysis  -  5:  Every 6 Minute(s)",
].map((t) => `<div>${icon("job")}<span>${t}</span></div>`).join("");

/* start offset of each run inside its half-hour slot, by column */
const offsets = [
  [0], [0], [0],
  [0, 0, 1, 0, 1, 0, 0, 0, 1, 0, 1, 0],
  [0, 0, 2, 1, 2, 1, 0, 1, 2, 1, 2, 1],
  [0, 1, 3, 3, 3, 2, 1, 2, 3, 2, 3, 0],
  [0, 2, 3, 3, 3, 3, 2, 3, 3, 3, 3, 1],
  [0, 3, 4, 6, 6, 3, 3, 3, 4, 3, 3, 2],
  [0, 3, 5, 6, 6, 3, 3, 4, 6, 4, 4, 3],
  [3, 6, 6, 6, 6, 4, 6, 5, 6, 6, 5, 3],
  [3, 6, 6, 9, 6, 4, 6, 6, 6, 6, 4, 3],
  [4, 6, 6, 9, 7, 5, 6, 6, 9, 6, 5, 4],
  [5, 9, 9, 9, 7, 6, 9, 6, 9, 7, 6, 5],
  [6, 9, 9, 10, 8, 6, 9, 9, 9, 7, 6, 6],
  [6, 10, 12, 10, 8, 6, 12, 9, 10, 9, 7, 6],
  [7, 12, 12, 11, 9, 9, 12, 12, 11, 8, 9, 6],
  [9, 12, 12, 11, 9, 9, 15, 12, 11, 8, 9, 7],
  [9, 15, 13, 12, 12, 12, 15, 12, 12, 9, 9, 8],
  [12, 15, 13, 12, 12, 12, 15, 13, 12, 9, 10, 8],
  [12, 15, 14, 15, 15, 0, 15, 13, 15, 12, 12, 9],
  [15, 16, 15, 15, 15, 15, 16, 14, 15, 12, 12, 9],
  [15, 16, 15, 15, 15, 15, 16, 15, 15, 15, 15, 10],
  [15, 16, 15, 16, 15, 15, 16, 15, 16, 15, 15, 14],
];
const warned = new Set(["5,6", "5,10", "7,15", "7,19"]);
/* the slot border covers the first pixel of its height */
const mark = (top) => `<span class="mark"><i class="${top < 1 ? "edge" : ""}" style="margin-top:${Math.max(top - 1, 0)}px"></i></span>`;
let dense = "";
for (let r = 0; r < 12; r++) {
  const hour = 2 + Math.floor(r / 2);
  for (let c = 0; c < 23; c++) {
    const top = offsets[c][r] || 0;
    const at = `grid-area:${r + 1}/${c + 1}`;
    if (c === 19 && r === 5) continue;
    if (c === 19 && r === 4) {
      dense += `<div class="ev warn big" style="${at}/span 2">${mark(top)}<span class="bar"></span><div class="body">${icon("job")}${icon("link", "link")}<span>4:23 AM</span></div></div>`;
    } else if (c === 22 && r === 11) {
      dense += `<div class="ev plain" style="${at}">${mark(top)}<div class="body">${icon("job")}<span>7:5</span></div></div>`;
    } else {
      dense += `<div class="ev ${warned.has(r + "," + c) ? "warn" : ""}" style="${at}">${mark(top)}<span class="bar"></span><div class="body">${icon("job")}<span>${hour}</span></div></div>`;
    }
  }
  if (r !== 5) dense += `<div class="hatch ${r === 4 || r === 7 ? "hot" : ""}" style="grid-area:${r + 1}/24/span ${r === 4 ? 2 : 1}"></div>`;
}
$("dense").innerHTML = dense;

/* half-hour lines from 8 AM; "D" marks the log backup job */
const lines = [
  "8:20 AM", "D8:30 AM|8:45 AM", "9:10 AM", "D9:30 AM|9:35 AM", "10:00 AM|10:25 AM", "D10:30 AM|10:50 AM",
  "11:15 AM", "D11:30 AM|11:40 AM", "12:05 PM", "D12:30 PM|12:30 PM|12:55 PM", "1:20 PM", "D1:30 PM|1:45 PM",
  "2:10 PM", "D2:30 PM|2:35 PM", "3:00 PM|3:25 PM", "D3:30 PM|3:50 PM", "4:15 PM", "D4:30 PM|4:40 PM",
  "5:05 PM", "D5:30 PM|5:30 PM|5:55 PM", "6:20 PM", "D6:30 PM|6:45 PM", "7:10 PM", "D7:30 PM|7:35 PM",
  "8:00 PM|8:25 PM", "D8:30 PM|8:50 PM", "9:15 PM", "D9:30 PM|9:40 PM", "10:05 PM", "D10:30 PM|10:30 PM|10:55 PM",
  "11:20 PM", "D11:30 PM|11:45 PM",
];
$("rows").innerHTML = lines.map((line) => `<div class="line">${line.split("|").map((e) => {
  const backup = e[0] === "D";
  const time = backup ? e.slice(1) : e;
  const minute = Number(time.split(":")[1].slice(0, 2)) % 30;
  const title = backup ? " DatabaseBackup - USER_DATABASES - LOG" : "  Process AW Tabular Model SQL 2014";
  return `<div class="ev">${mark(Math.floor(minute * 19 / 30))}<div class="body">${icon("job")}<span>${time}${title}</span></div></div>`;
}).join("")}</div>`).join("");
```
